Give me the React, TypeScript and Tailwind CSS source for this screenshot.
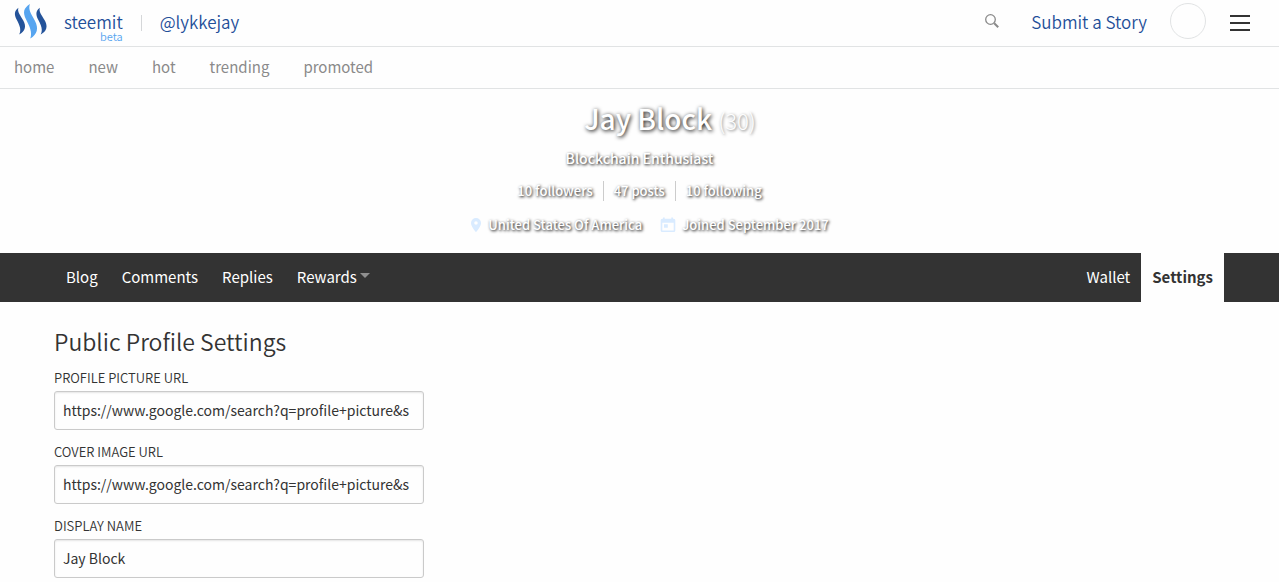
import React from "react";

const topics = ["home", "new", "hot", "trending", "promoted"];

const fields = [
  {
    id: "profile-image",
    label: "Profile picture url",
    value: "https://www.google.com/search?q=profile+picture&s",
  },
  {
    id: "cover-image",
    label: "Cover image url",
    value: "https://www.google.com/search?q=profile+picture&s",
  },
  { id: "display-name", label: "Display name", value: "Jay Block" },
];

function Logo() {
  return (
    <svg viewBox="0 0 34 36" className="h-9 w-[34px]" aria-hidden="true">
      <path
        fill="#24539a"
        d="M4.400 3.800C0.200 6.900 0 10.500 2.600 15.500C5.500 21.200 7.700 25.500 5.200 30.600C11.200 27.200 12.600 22.800 9.300 16.600C6.500 11.300 3 8.200 4.400 3.800Z"
      />
      <path
        fill="#57a5f0"
        d="M15.900 0C9.600 4.100 8.500 8.400 12.100 15.400C15.800 22.700 18.500 28.300 16.300 34.600C23.300 30.200 24.900 24.300 20.900 16.700C16.900 9.400 14 5.600 15.900 0Z"
      />
      <path
        fill="#24539a"
        d="M25.900 3.800C21.700 6.900 21.500 10.500 24.100 15.500C27 21.200 29.200 25.500 26.700 30.600C32.700 27.200 34.100 22.800 30.800 16.600C28 11.300 24.500 8.200 25.900 3.800Z"
      />
    </svg>
  );
}

function Header() {
  return (
    <header className="text-[#1f4f99]">
      <div className="flex h-[47px] items-center justify-between border-b border-[#e1e3e4] pr-[29px] pl-3.5">
        <div className="flex items-center text-[17px] font-[350]">
          <a href="#home" aria-label="Steemit home" className="pb-0.5">
            <Logo />
          </a>
          <a href="#home" className="ml-4 flex flex-col items-end pt-1.5 leading-5">
            steemit
            <span className="text-[11px] leading-2 text-[#57a5f0]">beta</span>
          </a>
          <span className="ml-[18px] h-4 w-px bg-[#d5d7d9]" />
          <a href="#profile" className="ml-[18px] pb-0.5 leading-5">@lykkejay</a>
        </div>
        <div className="flex items-center text-[17px] font-[350]">
          <a href="#search" aria-label="Search" className="pb-1 text-[#8a8a8a]">
            <svg viewBox="0 0 14 14" className="size-3.5" fill="none" stroke="currentColor" aria-hidden="true">
              <circle cx="5.500" cy="5.500" r="4.800" strokeWidth="1.300" />
              <path d="M9.200 9.200L13.200 13.200" strokeWidth="2" />
            </svg>
          </a>
          <a href="#submit" className="ml-8 pb-0.5 leading-5">Submit a Story</a>
          <button
            type="button"
            aria-label="Account"
            className="mb-1 ml-[23px] size-9 rounded-full border border-[#e1e3e4]"
          />
          <button type="button" aria-label="Menu" className="ml-6 flex w-5 flex-col gap-[5px]">
            <span className="h-0.5 bg-[#333333]" />
            <span className="h-0.5 bg-[#333333]" />
            <span className="h-0.5 bg-[#333333]" />
          </button>
        </div>
      </div>
      <nav className="flex h-[42px] items-center gap-[34px] border-b border-[#e1e3e4] px-3.5 pb-0.5 text-[15px] leading-5 text-[#8a8a8a]">
        {topics.map((topic) => (
          <a key={topic} href={`#${topic}`}>{topic}</a>
        ))}
      </nav>
    </header>
  );
}

function Banner() {
  return (
    <section className="flex flex-col items-center pt-[9px] pb-[18px] text-[13px] leading-5 font-medium text-white [text-shadow:1px_1px_3px_black]">
      <h1 className="pl-[61px] text-[28px] leading-10 font-medium [text-shadow:1px_1px_4px_black]">
        Jay Block{" "}
        <span className="text-[22px] font-light opacity-60 [text-shadow:1px_1px_3px_black]">(30)</span>
      </h1>
      <p className="mt-2 text-sm leading-5 font-medium">Blockchain Enthusiast</p>
      <div className="mt-[13px] flex">
        <a href="#followers" className="border-r border-[#cccccc] px-2.5">10 followers</a>
        <a href="#posts" className="border-r border-[#cccccc] px-2.5">47 posts</a>
        <a href="#following" className="px-2.5">10 following</a>
      </div>
      <div className="mt-3.5 flex items-center gap-[18px] pl-5">
        <span className="flex items-center gap-1.5">
          <svg viewBox="0 0 12 16" className="h-4 w-3" fill="#d9ebff" aria-hidden="true">
            <path
              fillRule="evenodd"
              d="M6 1a5 5 0 0 0-5 5c0 3.700 5 9.300 5 9.300S11 9.700 11 6a5 5 0 0 0-5-5Zm0 3.200a1.800 1.800 0 1 1 0 3.600a1.800 1.800 0 0 1 0-3.600Z"
            />
          </svg>
          United States Of America
        </span>
        <span className="flex items-center gap-1.5">
          <svg viewBox="0 0 16 16" className="size-4" fill="#d9ebff" aria-hidden="true">
            <path
              fillRule="evenodd"
              d="M3 .5h1.700v1.300h6.600V.5H13v1.300h.8A1.500 1.500 0 0 1 15.300 3.300v10.200a1.500 1.500 0 0 1-1.500 1.500H2.200A1.500 1.500 0 0 1 .7 13.500V3.300a1.500 1.500 0 0 1 1.500-1.500H3V.5ZM2.300 5.800v7.700h11.400V5.800H2.300ZM4 7.300H7.800v3.500H4V7.300Z"
            />
          </svg>
          Joined September 2017
        </span>
      </div>
    </section>
  );
}

function ProfileNav() {
  return (
    <nav className="flex h-[49px] items-stretch justify-between bg-[#333333] px-[55px] text-[15px] leading-5 text-white">
      <div className="flex items-center gap-6 pb-0.5 pl-[11px]">
        <a href="#blog">Blog</a>
        <a href="#comments">Comments</a>
        <a href="#replies">Replies</a>
        <button type="button" className="flex items-center gap-[3px]">
          Rewards
          <svg viewBox="0 0 10 5" className="mb-0.5 h-[5px] w-2.5" fill="#8f8f8f" aria-hidden="true">
            <path d="M0 0h10L5 5Z" />
          </svg>
        </button>
      </div>
      <div className="flex items-stretch">
        <a href="#wallet" className="flex items-center px-[11px] pb-0.5">Wallet</a>
        <a
          href="#settings"
          aria-current="page"
          className="flex items-center bg-[#fefefe] px-[11px] pb-0.5 font-bold text-[#333333]"
        >
          Settings
        </a>
      </div>
    </nav>
  );
}

function SettingsForm() {
  return (
    <main className="px-[54px] pt-[23px] text-[#333333]">
      <h2 className="text-[23px] leading-8 font-[350]">Public Profile Settings</h2>
      <form className="mt-[11px] flex max-w-[370px] flex-col gap-3">
        {fields.map((field) => (
          <div key={field.id} className="flex flex-col gap-[3px]">
            <label htmlFor={field.id} className="text-[13px] leading-5 font-[350] uppercase">{field.label}</label>
            <input
              id={field.id}
              type="text"
              defaultValue={field.value}
              className="h-[39px] w-full rounded-[3px] border border-[#cacaca] bg-[#fefefe] px-2 pb-0.5 text-sm shadow-[inset_0_1px_2px_rgba(0,0,0,0.1)]"
            />
          </div>
        ))}
      </form>
    </main>
  );
}

export default function App() {
  return (
    <div className="min-h-screen bg-[#fefefe] font-['Noto_Sans_CJK_SC','Noto_Sans',sans-serif]">
      <Header />
      <Banner />
      <ProfileNav />
      <SettingsForm />
    </div>
  );
}
